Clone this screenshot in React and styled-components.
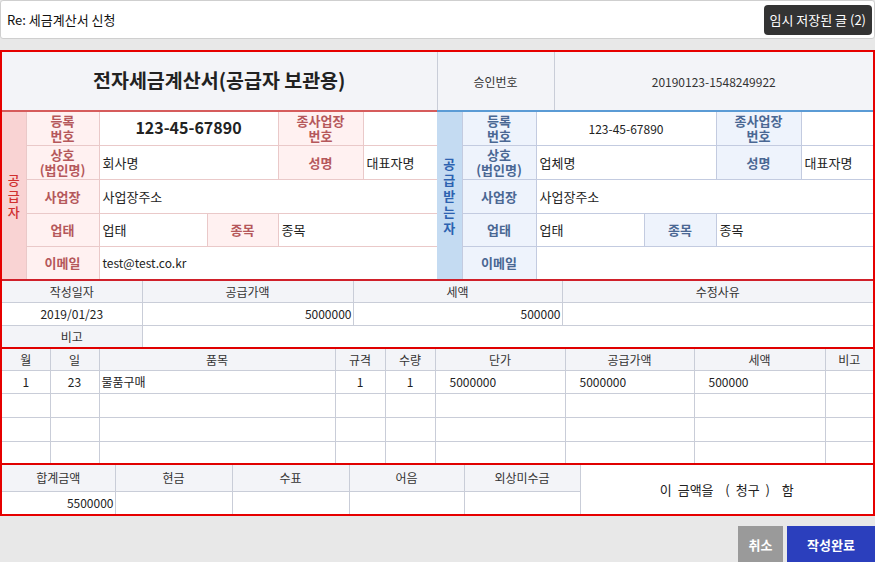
import React from "react";
import styled, { createGlobalStyle } from "styled-components";

const GlobalStyle = createGlobalStyle`
  body {
    margin: 0;
    background: #e8e8e8;
    font-family: "Noto Sans CJK KR", "Noto Sans", sans-serif;
    font-size: 12px;
    color: #222;
  }
  * { box-sizing: border-box; }
`;

const tones = {
  head: { bg: "#f3f4f8", fg: "#333", line: "#c9cdd8" },
  plain: { bg: "#fff", fg: "#222", line: "#c9cdd8" },
  sStrip: { bg: "#f9d3d3", fg: "#d0302f", line: "#eac9c9" },
  sLabel: { bg: "#fff1f1", fg: "#b5585b", line: "#eac9c9", bold: true },
  sValue: { bg: "#fff", fg: "#222", line: "#eac9c9" },
  bStrip: { bg: "#c4dbf2", fg: "#2c62b0", line: "#c3cbe0" },
  bLabel: { bg: "#eef3fc", fg: "#4a6793", line: "#c3cbe0", bold: true },
  bValue: { bg: "#fff", fg: "#222", line: "#c3cbe0" },
};

const Page = styled.div`
  height: 562px;
  overflow: hidden;
`;

const TopBar = styled.div`
  height: 39px;
  background: #fff;
  border: 1px solid #cfcfcf;
  border-radius: 3px;
  display: flex;
  align-items: center;
  justify-content: space-between;
  padding: 0 2px 0 6px;
`;

const Subject = styled.span`
  font-size: 13px;
  color: #111;
`;

const DraftButton = styled.button`
  height: 30px;
  padding: 0 6px;
  background: #333;
  color: #fff;
  border: 0;
  border-radius: 4px;
  font-family: inherit;
  font-size: 13px;
`;

const Form = styled.div`
  margin-top: 11px;
  border: 2px solid #e60000;
  background: #fff;
`;

const Section = styled.div`
  border-top: ${(p) => (p.$line ? `2px solid ${p.$line}` : "0")};
`;

const Parties = styled.div`
  display: flex;
`;

const Party = styled.div`
  width: ${(p) => p.$w}px;
  border-top: 2px solid ${(p) => p.$line};
`;

const Table = styled.table`
  width: 100%;
  border-collapse: collapse;
  border-style: hidden;
  table-layout: fixed;
`;

const Row = styled.tr`
  height: ${(p) => p.$h}px;
`;

const Cell = styled.td`
  border: 1px solid ${(p) => tones[p.$tone || "plain"].line};
  background: ${(p) => tones[p.$tone || "plain"].bg};
  color: ${(p) => tones[p.$tone || "plain"].fg};
  font-weight: ${(p) => (tones[p.$tone || "plain"].bold ? 600 : "normal")};
  text-align: ${(p) => p.$align || "center"};
  padding: ${(p) => (p.$pad != null ? `0 ${p.$pad}px` : "0 2px")};
  vertical-align: middle;
  line-height: ${(p) => (p.$size ? p.$size + 2 : 15)}px;
  font-size: ${(p) => p.$size || 12}px;
  white-space: nowrap;
`;

const Title = styled.span`
  font-size: 19.5px;
  font-weight: bold;
  color: #222;
`;

const BigNumber = styled.span`
  font-size: 16px;
  font-weight: bold;
  color: #222;
`;

const Stack = styled.span`
  display: inline-flex;
  flex-direction: column;
  align-items: center;
  font-size: 13px;
  font-weight: ${(p) => (p.$bold ? "bold" : 500)};
`;

const Char = styled.span`
  display: block;
  height: 16px;
  line-height: 16px;
`;

const Claim = styled.span`
  font-size: 13px;
  word-spacing: 3px;
`;

const Actions = styled.div`
  margin-top: 10px;
  display: flex;
  justify-content: flex-end;
  gap: 4px;
`;

const ActionButton = styled.button`
  height: 36px;
  width: ${(p) => p.$w}px;
  border: 0;
  background: ${(p) => p.$bg};
  color: #fff;
  font-family: inherit;
  font-size: 13px;
  font-weight: bold;
`;

const Cols = ({ widths }) => (
  <colgroup>
    {widths.map((w, i) => (
      <col key={i} style={{ width: w }} />
    ))}
  </colgroup>
);

const Vertical = ({ text, bold }) => (
  <Stack $bold={bold}>
    {text.split("").map((c, i) => (
      <Char key={i}>{c}</Char>
    ))}
  </Stack>
);

const PartyTable = ({ kind, widths, strip, regNo, bigReg, name, owner, address, biz, item, email }) => {
  const L = kind === "s" ? "sLabel" : "bLabel";
  const V = kind === "s" ? "sValue" : "bValue";
  const S = kind === "s" ? "sStrip" : "bStrip";
  return (
    <Table>
      <Cols widths={widths} />
      <tbody>
        <Row $h={33}>
          <Cell $tone={S} rowSpan={5}>
            <Vertical text={strip} bold={kind === "b"} />
          </Cell>
          <Cell $tone={L} $size={13}>등록<br />번호</Cell>
          <Cell $tone={V} colSpan={2}>
            {bigReg ? <BigNumber>{regNo}</BigNumber> : regNo}
          </Cell>
          <Cell $tone={L} $size={13}>종사업장<br />번호</Cell>
          <Cell $tone={V} />
        </Row>
        <Row $h={34}>
          <Cell $tone={L} $size={13}>상호<br />(법인명)</Cell>
          <Cell $tone={V} colSpan={2} $align="left" $pad={3} $size={13}>{name}</Cell>
          <Cell $tone={L} $size={13}>성명</Cell>
          <Cell $tone={V} $align="left" $pad={3} $size={13}>{owner}</Cell>
        </Row>
        <Row $h={34}>
          <Cell $tone={L} $size={13}>사업장</Cell>
          <Cell $tone={V} colSpan={4} $align="left" $pad={3} $size={13}>{address}</Cell>
        </Row>
        <Row $h={33}>
          <Cell $tone={L} $size={13}>업태</Cell>
          <Cell $tone={V} $align="left" $pad={3} $size={13}>{biz}</Cell>
          <Cell $tone={L} $size={13}>종목</Cell>
          <Cell $tone={V} colSpan={2} $align="left" $pad={3} $size={13}>{item}</Cell>
        </Row>
        <Row $h={33}>
          <Cell $tone={L} $size={13}>이메일</Cell>
          <Cell $tone={V} colSpan={4} $align="left" $pad={3}>{email}</Cell>
        </Row>
      </tbody>
    </Table>
  );
};

const items = [
  ["1", "23", "물품구매", "1", "1", "5000000", "5000000", "500000", ""],
  ["", "", "", "", "", "", "", "", ""],
  ["", "", "", "", "", "", "", "", ""],
  ["", "", "", "", "", "", "", "", ""],
];
const itemHeights = [23, 24, 24, 22];
const itemAlign = ["center", "center", "left", "center", "center", "left", "left", "left", "center"];
const itemPad = [2, 2, 2, 2, 2, 14, 14, 14, 2];

export default function App() {
  return (
    <Page>
      <GlobalStyle />
      <TopBar>
        <Subject>Re: 세금계산서 신청</Subject>
        <DraftButton>임시 저장된 글 (2)</DraftButton>
      </TopBar>

      <Form>
        <Section>
          <Table>
            <Cols widths={[435, 117, 319]} />
            <tbody>
              <Row $h={58}>
                <Cell $tone="head"><Title>전자세금계산서(공급자 보관용)</Title></Cell>
                <Cell $tone="head">승인번호</Cell>
                <Cell $tone="head">20190123-1548249922</Cell>
              </Row>
            </tbody>
          </Table>
        </Section>

        <Parties>
          <Party $w={435} $line="#d65c5c">
            <PartyTable
              kind="s"
              widths={[24, 73, 108, 71, 85, 74]}
              strip="공급자"
              regNo="123-45-67890"
              bigReg
              name="회사명"
              owner="대표자명"
              address="사업장주소"
              biz="업태"
              item="종목"
              email="test@test.co.kr"
            />
          </Party>
          <Party $w={436} $line="#5b9bd5">
            <PartyTable
              kind="b"
              widths={[25, 74, 108, 72, 85, 72]}
              strip="공급받는자"
              regNo="123-45-67890"
              name="업체명"
              owner="대표자명"
              address="사업장주소"
              biz="업태"
              item="종목"
              email=""
            />
          </Party>
        </Parties>

        <Section $line="#d0202a">
          <Table>
            <Cols widths={[140, 211, 209, 311]} />
            <tbody>
              <Row $h={21}>
                <Cell $tone="head">작성일자</Cell>
                <Cell $tone="head">공급가액</Cell>
                <Cell $tone="head">세액</Cell>
                <Cell $tone="head">수정사유</Cell>
              </Row>
              <Row $h={23}>
                <Cell>2019/01/23</Cell>
                <Cell $align="right" $pad={1}>5000000</Cell>
                <Cell $align="right" $pad={1}>500000</Cell>
                <Cell />
              </Row>
              <Row $h={22}>
                <Cell $tone="head">비고</Cell>
                <Cell colSpan={3} />
              </Row>
            </tbody>
          </Table>
        </Section>

        <Section $line="#e00000">
          <Table>
            <Cols widths={[48, 49, 236, 50, 50, 130, 129, 131, 48]} />
            <tbody>
              <Row $h={21}>
                {["월", "일", "품목", "규격", "수량", "단가", "공급가액", "세액", "비고"].map((h) => (
                  <Cell key={h} $tone="head">{h}</Cell>
                ))}
              </Row>
              {items.map((r, ri) => (
                <Row key={ri} $h={itemHeights[ri]}>
                  {r.map((v, ci) => (
                    <Cell key={ci} $align={itemAlign[ci]} $pad={itemPad[ci]}>{v}</Cell>
                  ))}
                </Row>
              ))}
            </tbody>
          </Table>
        </Section>

        <Section $line="#e00000">
          <Table>
            <Cols widths={[113, 117, 117, 115, 116, 293]} />
            <tbody>
              <Row $h={26}>
                <Cell $tone="head">합계금액</Cell>
                <Cell $tone="head">현금</Cell>
                <Cell $tone="head">수표</Cell>
                <Cell $tone="head">어음</Cell>
                <Cell $tone="head">외상미수금</Cell>
                <Cell rowSpan={2}>
                  <Claim>이 금액을 &nbsp;( 청구 ) &nbsp;함</Claim>
                </Cell>
              </Row>
              <Row $h={23}>
                <Cell $align="right" $pad={1}>5500000</Cell>
                <Cell />
                <Cell />
                <Cell />
                <Cell />
              </Row>
            </tbody>
          </Table>
        </Section>
      </Form>

      <Actions>
        <ActionButton $w={45} $bg="#9a9a9a">취소</ActionButton>
        <ActionButton $w={88} $bg="#2b3fbd">작성완료</ActionButton>
      </Actions>
    </Page>
  );
}
